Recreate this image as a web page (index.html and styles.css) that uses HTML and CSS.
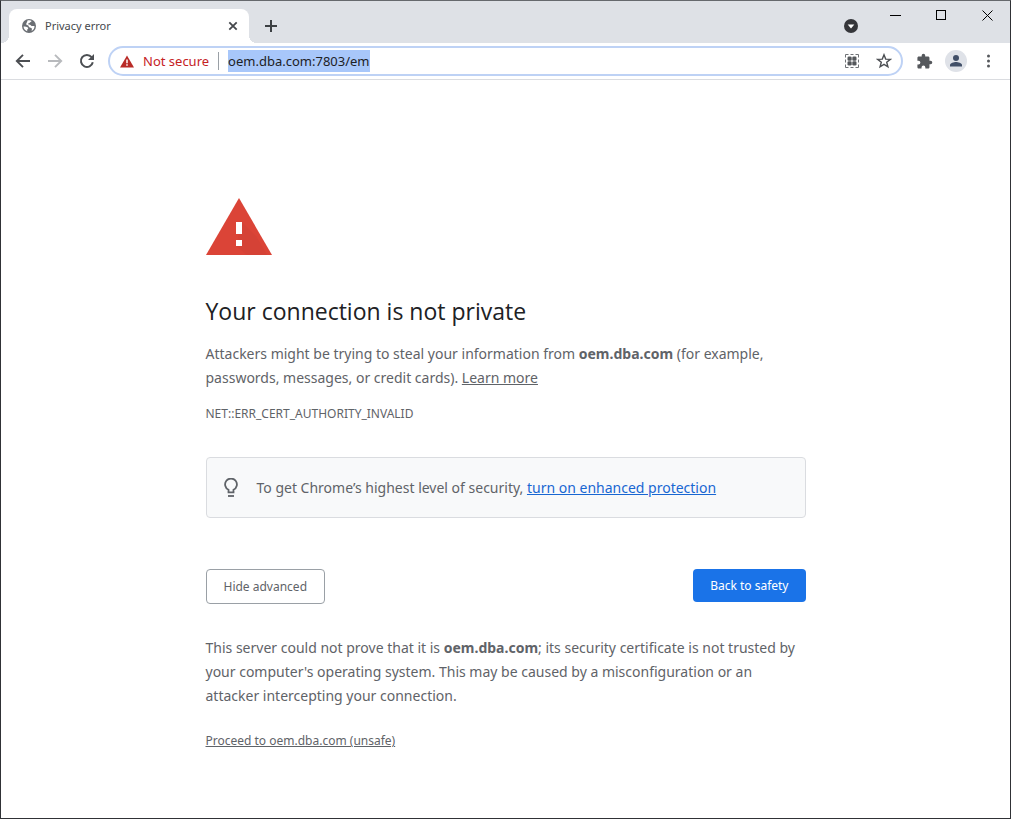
FILE: index.html
```html
<!DOCTYPE html>
<html lang="en">
<head>
<meta charset="utf-8">
<title>Privacy error</title>
<link rel="stylesheet" href="styles.css">
</head>
<body>
<div class="window">
  <header class="tabstrip">
    <div class="tab">
      <svg class="favicon" viewBox="0 0 16 16" aria-hidden="true"><circle cx="8" cy="8" r="7" fill="#6b6f74"/><path d="M2.500 8.600c1.300-.3 2.700-.1 4 .6.9.4.9 1.300.2 1.900-.7.600-.6 1.300-.4 2.200A5.600 5.600 0 0 1 2.500 8.600zM6.200 2.800c1.300-.6 3.200-.6 4.500.1-.5.800-1.500 1-1.800 1.700-.3.800-1.500.5-1.700 1.200-.2.700.9.800 1.600.9 1.200.2 1.300 1.300 2.400 1.300h2.300c.1 2-1 4-2.800 5-.2-1 .5-1.700.1-2.500-.5-1-2-.7-2.700-1.500-.7-.9-.2-1.600-1.400-1.800-1-.2-1.700-.8-1.400-1.800.3-.9 1.300-1.300.9-2.600z" fill="#fff"/></svg>
      <span class="tab-title">Privacy error</span>
      <button class="icon-btn tab-close" aria-label="Close tab"><svg width="10" height="10" viewBox="0 0 10 10"><path d="M1.300 1.300l7.400 7.400M8.700 1.300L1.300 8.700" stroke="#45484c" stroke-width="1.800"/></svg></button>
    </div>
    <button class="icon-btn new-tab" aria-label="New tab"><svg width="14" height="14" viewBox="0 0 14 14"><path d="M7 1v12M1 7h12" stroke="#3c4043" stroke-width="2"/></svg></button>
    <button class="icon-btn tab-search" aria-label="Search tabs"><svg width="14" height="14" viewBox="0 0 14 14"><circle cx="7" cy="7" r="7" fill="#35363a"/><path d="M3.700 5.500h6.600L7 9.400z" fill="#fff"/></svg></button>
    <div class="window-controls">
      <button class="icon-btn" aria-label="Minimize"><svg width="11" height="11" viewBox="0 0 11 11"><path d="M0 5.500h11" stroke="#000"/></svg></button>
      <button class="icon-btn" aria-label="Maximize"><svg width="11" height="11" viewBox="0 0 11 11"><rect x=".5" y=".5" width="9" height="9" fill="none" stroke="#000"/></svg></button>
      <button class="icon-btn" aria-label="Close"><svg width="11" height="11" viewBox="0 0 11 11"><path d="M.5.500l10 10M10.500.500l-10 10" stroke="#000"/></svg></button>
    </div>
  </header>

  <nav class="toolbar" aria-label="Browser">
    <div class="nav-buttons">
      <button class="icon-btn" aria-label="Back"><svg width="16" height="16" viewBox="0 0 16 16"><path d="M15 8H2M8 1.800L1.800 8 8 14.200" fill="none" stroke="#4c4f53" stroke-width="1.900"/></svg></button>
      <button class="icon-btn" aria-label="Forward"><svg width="16" height="16" viewBox="0 0 16 16"><path d="M1 8h13M8 1.800L14.200 8 8 14.200" fill="none" stroke="#b8babd" stroke-width="1.900"/></svg></button>
      <button class="icon-btn" aria-label="Reload"><svg width="16" height="16" viewBox="0 0 16 16"><path d="M13.800 9.200A6 6 0 1 1 12.600 4.100" fill="none" stroke="#4c4f53" stroke-width="2"/><path d="M15 1v6H9z" fill="#4c4f53"/></svg></button>
    </div>
    <div class="omnibox">
      <svg class="warn" width="14" height="13" viewBox="0 0 14 13" aria-hidden="true"><path d="M7 .5L14 12.500H0z" fill="#b92b27"/><path d="M7 4.500v3.700M7 9.200v1.600" stroke="#fff" stroke-width="1.500"/></svg>
      <span class="not-secure">Not secure</span>
      <input class="url" type="text" value="oem.dba.com:7803/em" aria-label="Address">
      <div class="page-actions">
        <button class="icon-btn" aria-label="QR code"><svg width="16" height="16" viewBox="0 0 16 16"><path d="M1.500 4.500v-3h3M11.500 1.500h3v3M14.500 11.500v3h-3M4.500 14.500h-3v-3M6.500 1.500h3M6.500 14.500h3M1.500 6.500v3M14.500 6.500v3" fill="none" stroke="#6f7276" stroke-width="1"/><g fill="#55585c"><rect x="3.500" y="3.500" width="4.200" height="4.200" rx="1.300"/><rect x="8.300" y="3.500" width="4.200" height="4.200" rx="1.300"/><rect x="3.500" y="8.300" width="4.200" height="4.200" rx="1.300"/><rect x="8.300" y="8.300" width="4.200" height="4.200" rx="1.300"/></g></svg></button>
        <button class="icon-btn" aria-label="Bookmark"><svg width="16" height="16" viewBox="0 0 16 16"><path d="M8 1.800l1.700 4.300 4.600.3-3.600 2.900 1.200 4.500L8 11.300l-3.900 2.500 1.200-4.500-3.600-2.900 4.600-.3z" fill="none" stroke="#4c4f53" stroke-width="1.400"/></svg></button>
      </div>
    </div>
    <div class="browser-actions">
      <button class="icon-btn" aria-label="Extensions"><svg width="17" height="17" viewBox="0 0 24 24"><path d="M20.500 11H19V7c0-1.100-.9-2-2-2h-4V3.500a2.500 2.500 0 0 0-5 0V5H4c-1.100 0-2 .9-2 2v3.800h1.500a2.700 2.700 0 0 1 0 5.400H2V20c0 1.100.9 2 2 2h3.800v-1.500a2.700 2.700 0 0 1 5.400 0V22H17c1.100 0 2-.9 2-2v-4h1.500a2.500 2.500 0 0 0 0-5z" fill="#55585c"/></svg></button>
      <button class="icon-btn avatar" aria-label="Profile"><svg width="14" height="14" viewBox="0 0 14 14"><circle cx="7" cy="4" r="3" fill="#414f68"/><path d="M1 12.500v-1.500c0-2 4-3 6-3s6 1 6 3v1.500z" fill="#414f68"/></svg></button>
      <button class="icon-btn" aria-label="Menu"><svg width="16" height="16" viewBox="0 0 16 16" fill="#55585c"><circle cx="8.500" cy="3" r="1.500"/><circle cx="8.500" cy="8" r="1.500"/><circle cx="8.500" cy="13" r="1.500"/></svg></button>
    </div>
  </nav>

  <main class="page">
    <div class="content">
      <svg class="alert" width="66" height="57" viewBox="0 0 66 57" aria-hidden="true"><path d="M33 0l33 57H0z" fill="#db4437"/><path d="M36 24l14 14 11 19H41L30 48z" fill="#d54236"/><path d="M30 24h6v12h-6zM30 42h6v6h-6z" fill="#fff"/></svg>
      <h1>Your connection is not private</h1>
      <p>Attackers might be trying to steal your information from <strong>oem.dba.com</strong> (for example, passwords, messages, or credit cards). <a href="#">Learn more</a></p>
      <div class="error-code">NET::ERR_CERT_AUTHORITY_INVALID</div>
      <div class="promo">
        <svg width="16" height="20" viewBox="0 0 16 20" aria-hidden="true"><path d="M5.500 14.300v-2.500A5.900 5.900 0 1 1 10.500 11.800v2.500z" fill="none" stroke="#5f6368" stroke-width="1.800"/><path d="M5 18h6" stroke="#5f6368" stroke-width="1.800"/></svg>
        <span>To get Chrome’s highest level of security, <a class="promo-link" href="#">turn on enhanced protection</a></span>
      </div>
      <div class="actions">
        <button class="btn">Hide advanced</button>
        <button class="btn btn-primary">Back to safety</button>
      </div>
      <p>This server could not prove that it is <strong>oem.dba.com</strong>; its security certificate is not trusted by your computer's operating system. This may be caused by a misconfiguration or an attacker intercepting your connection.</p>
      <a class="proceed" href="#">Proceed to oem.dba.com (unsafe)</a>
    </div>
  </main>
</div>
</body>
</html>
```

FILE: styles.css
```css
* { box-sizing: border-box; }

body {
  margin: 0;
  background: #fff;
  color: #5f6368;
  font: 14px/24px "Noto Sans", "Open Sans", sans-serif;
}

button, input {
  margin: 0;
  padding: 0;
  border: 0;
  background: none;
  color: inherit;
  font: inherit;
}

svg { display: block; flex: none; }

a { color: inherit; }

.window {
  display: flex;
  flex-direction: column;
  min-height: 100vh;
  border: 1px solid #303236;
  border-top-color: #66696d;
}

.icon-btn {
  display: flex;
  align-items: center;
  justify-content: center;
  width: 32px;
  height: 28px;
}

.tabstrip {
  display: flex;
  align-items: flex-end;
  height: 42px;
  padding-left: 8px;
  background: #dee1e6;
}

.tab {
  position: relative;
  display: flex;
  align-items: center;
  gap: 8px;
  width: 240px;
  height: 34px;
  padding: 0 8px 0 12px;
  border-radius: 8px 8px 0 0;
  background: #fff;
}

.tab::before,
.tab::after {
  content: "";
  position: absolute;
  bottom: 0;
  width: 8px;
  height: 8px;
}

.tab::before {
  right: 100%;
  background: radial-gradient(circle at 0 0, transparent 8px, #fff 8px);
}

.tab::after {
  left: 100%;
  background: radial-gradient(circle at 100% 0, transparent 8px, #fff 8px);
}

.favicon { width: 16px; height: 16px; }

.tab-title { flex: 1; font-size: 11px; color: #45484c; }

.tab-close { width: 16px; height: 16px; }

.new-tab { width: 28px; height: 34px; margin-left: 8px; }

.tab-search { height: 34px; margin-left: auto; margin-right: 5px; }

.window-controls { display: flex; align-self: flex-start; }

.window-controls .icon-btn { width: 46px; }

.toolbar {
  display: flex;
  align-items: center;
  height: 37px;
  padding: 0 6px;
  border-bottom: 1px solid #dadce0;
}

.nav-buttons { display: flex; padding-right: 5px; }

.omnibox {
  display: flex;
  flex: 1;
  align-items: center;
  height: 30px;
  padding: 0 8px 0 10px;
  border: 2px solid #bed2f5;
  border-radius: 15px;
}

.not-secure {
  margin: 0 9px;
  padding-right: 9px;
  border-right: 1px solid #9aa0a6;
  font-size: 13px;
  line-height: 18px;
  color: #c5221f;
}

.url {
  field-sizing: content;
  height: 22px;
  background: #a8c7fa;
  font-size: 13px;
  color: #202124;
}

.page-actions { display: flex; margin-left: auto; margin-right: -7px; }

.browser-actions { display: flex; align-items: center; padding-left: 5px; }

.avatar {
  width: 22px;
  height: 22px;
  margin: 0 5px;
  border-radius: 50%;
  background: #dfe2e8;
}

.page { flex: 1; padding: 118px 24px 0; }

.content { max-width: 600px; margin: 0 auto; }

h1 {
  margin: 42px 0 16px;
  font-family: "Open Sans", "Noto Sans", sans-serif;
  font-size: 23px;
  font-weight: 400;
  line-height: 29px;
  color: #202124;
}

p { margin: 0; }

.error-code { margin-top: 12px; font-size: 12px; }

.promo {
  display: flex;
  align-items: center;
  gap: 18px;
  min-height: 61px;
  margin-top: 31px;
  padding: 0 16px;
  border: 1px solid #dadce0;
  border-radius: 4px;
  background: #f8f9fa;
}

.promo-link { color: #1967d2; }

.actions {
  display: flex;
  align-items: flex-start;
  justify-content: space-between;
  margin: 51px 0 32px;
}

.btn {
  height: 35px;
  padding: 0 17px;
  border: 1px solid #9aa0a6;
  border-radius: 4px;
  font-size: 12px;
}

.btn-primary {
  height: 33px;
  border: 0;
  background: #1a73e8;
  color: #fff;
}

.proceed { display: inline-block; margin-top: 21px; font-size: 12px; }
```
